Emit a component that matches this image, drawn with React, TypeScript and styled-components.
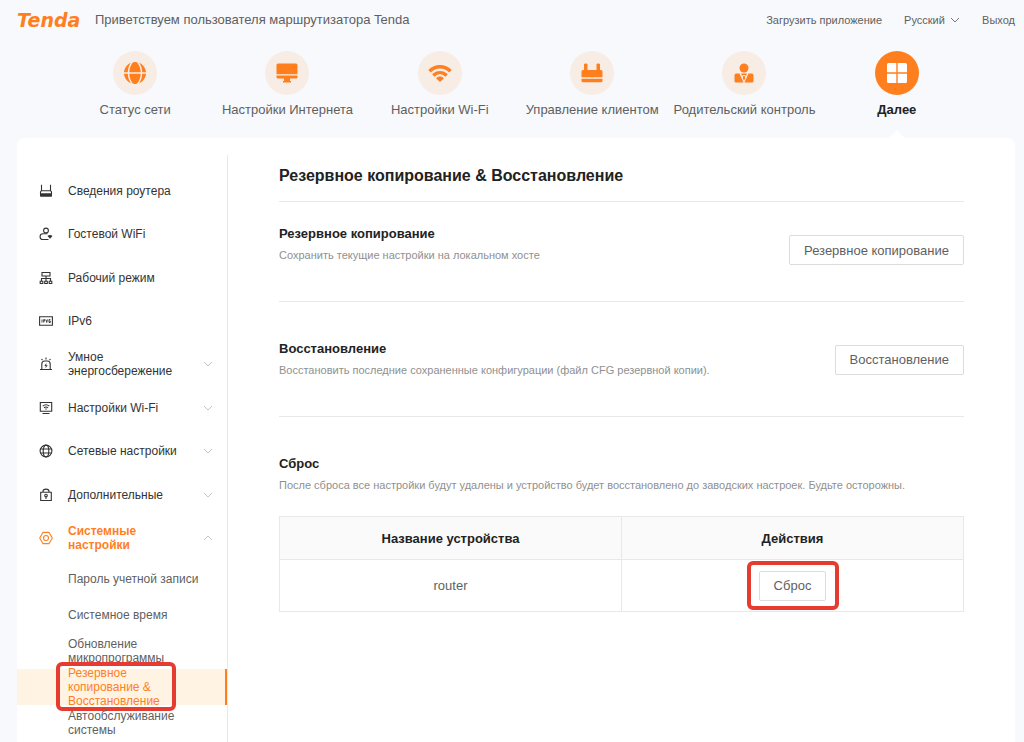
import React from "react";
import styled, { createGlobalStyle, css } from "styled-components";

const ORANGE = "#ff7f1f";
const LINE = "#e8e8e8";

const GlobalStyle = createGlobalStyle`
  *, *::before, *::after { box-sizing: border-box; }
  body {
    margin: 0;
    background: #f7f9fc;
    color: #5f5f5f;
    font-family: "Liberation Sans", Arial, sans-serif;
    font-size: 13px;
  }
  h1, h2, p, ul { margin: 0; padding: 0; }
  ul { list-style: none; }
  a { color: inherit; text-decoration: none; }
`;

const Page = styled.div`
  display: flex;
  flex-direction: column;
  min-height: 100vh;
  padding: 0 9px 0 17px;
`;

const Header = styled.header`
  display: flex;
  align-items: center;
  height: 40px;
`;

const Logo = styled.a`
  width: 78px;
  color: ${ORANGE};
  font: italic bold 19px/24px "DejaVu Sans", sans-serif;
`;

const Welcome = styled.p`
  flex: 1;
  line-height: 20px;
`;

const TopLinks = styled.div`
  display: flex;
  align-items: center;
  gap: 22px;
  font-size: 11px;
`;

const Language = styled.label`
  display: flex;
  align-items: center;
  gap: 5px;
`;

const LanguageSelect = styled.select`
  appearance: none;
  padding: 0;
  border: 0;
  background: none;
  color: inherit;
  font: inherit;
`;

const Nav = styled.nav`
  display: grid;
  grid-template-columns: repeat(6, 1fr);
  height: 98px;
  padding: 11px 42px 0;
`;

const NavItem = styled.a<{ $active?: boolean }>`
  position: relative;
  display: flex;
  flex-direction: column;
  align-items: center;
  gap: 5px;
  line-height: 20px;
  white-space: nowrap;
  ${(p) =>
    p.$active &&
    css`
      color: #222;
      font-weight: bold;
      &::after {
        content: "";
        position: absolute;
        bottom: 0;
        border: 8px solid transparent;
        border-top-width: 0;
        border-bottom-color: #fff;
      }
    `}
`;

const NavBadge = styled.span<{ $active?: boolean }>`
  display: grid;
  place-items: center;
  width: 44px;
  height: 44px;
  border-radius: 50%;
  background: ${(p) => (p.$active ? ORANGE : "#f8ede5")};
  color: ${(p) => (p.$active ? "#fff" : ORANGE)};
`;

const Panel = styled.div`
  display: flex;
  flex: 1;
  padding-top: 17px;
  border-radius: 8px 8px 0 0;
  background: #fff;
`;

const Sidebar = styled.aside`
  flex: 0 0 211px;
  padding-top: 14px;
  border-right: 1px solid ${LINE};
`;

const Menu = styled.ul`
  display: grid;
  grid-auto-rows: 1fr;
  height: 391px;
  margin-bottom: 1px;
`;

const MenuLink = styled.a<{ $active?: boolean }>`
  display: grid;
  grid-template-columns: 14px 120px 10px;
  column-gap: 15px;
  align-items: center;
  justify-content: start;
  height: 100%;
  padding-left: 22px;
  color: ${(p) => (p.$active ? ORANGE : "#333")};
  font-size: 12px;
  font-weight: ${(p) => (p.$active ? "bold" : "normal")};
  line-height: 14px;
`;

const MenuText = styled.span`
  max-width: 112px;
`;

const SubLink = styled.a<{ $active?: boolean }>`
  position: relative;
  display: flex;
  align-items: center;
  height: 36px;
  padding: 0 20px 0 51px;
  font-size: 12px;
  line-height: 14px;
  ${(p) =>
    p.$active &&
    css`
      border-right: 2px solid ${ORANGE};
      background: #fff3e3;
      color: ${ORANGE};
    `}
`;

const SubText = styled.span`
  max-width: 132px;
`;

const Ring = styled.span<{ $inset: string }>`
  position: absolute;
  inset: ${(p) => p.$inset};
  border: 4px solid #e53b31;
  border-radius: 6px;
  pointer-events: none;
`;

const Content = styled.main`
  flex: 1;
  min-width: 0;
  padding: 0 51px 40px 51px;
`;

const Title = styled.h1`
  height: 47px;
  padding-top: 9px;
  border-bottom: 1px solid ${LINE};
  color: #222;
  font-size: 16px;
  line-height: 24px;
`;

const Section = styled.section<{ $first?: boolean }>`
  display: flex;
  align-items: ${(p) => (p.$first ? "flex-end" : "center")};
  justify-content: space-between;
  padding: ${(p) => (p.$first ? "22px 0 36px" : "37px 0 36px")};
  border-bottom: 1px solid ${LINE};
`;

const ResetIntro = styled.div`
  padding: 37px 0 21px;
`;

const SectionTitle = styled.h2`
  color: #222;
  font-size: 13px;
  line-height: 20px;
`;

const Hint = styled.p`
  padding: 2px 0 1px;
  color: #909090;
  font-size: 11px;
  line-height: 18px;
`;

const Button = styled.button`
  height: 30px;
  padding: 0 14px;
  border: 1px solid #dcdcdc;
  border-radius: 2px;
  background: #fff;
  color: #5f5f5f;
  font: inherit;
`;

const Devices = styled.table`
  width: 100%;
  border-collapse: collapse;
  table-layout: fixed;
  text-align: center;

  th, td { padding: 0; border: 1px solid ${LINE}; }
  th { height: 43px; background: #fafafa; color: #222; }
  td { height: 52px; }
`;

const Marked = styled.span`
  position: relative;
  display: inline-block;
`;

const Chevron = ({ up, color = "#c4c4c4" }: { up?: boolean; color?: string }) => (
  <svg width="10" height="10" viewBox="0 0 10 10" fill="none" stroke={color} strokeWidth="1">
    <path d={up ? "M1 7l4-4 4 4" : "M1 3l4 4 4-4"} />
  </svg>
);

const navItems = [
  {
    label: "Статус сети",
    icon: (
      <svg width="24" height="24" viewBox="0 0 24 24">
        <circle cx="12" cy="12" r="11" fill="currentColor" />
        <g fill="none" stroke="#f8ede5" strokeWidth="1.500">
          <path d="M0 12h24" />
          <path d="M10 0C4 7 4 17 10 24M14 0c6 7 6 17 0 24" />
        </g>
      </svg>
    ),
  },
  {
    label: "Настройки Интернета",
    icon: (
      <svg width="22" height="20" viewBox="0 0 22 20" fill="currentColor">
        <path d="M2 0.500h18a1.500 1.500 0 0 1 1.500 1.500v9.300H.5V2A1.500 1.500 0 0 1 2 .5zM.5 12.500h21V14a1.500 1.500 0 0 1-1.500 1.500h-6v2.500h1v1.500H7V18h1v-2.500H2A1.500 1.500 0 0 1 .5 14z" />
      </svg>
    ),
  },
  {
    label: "Настройки Wi-Fi",
    icon: (
      <svg width="24" height="18" viewBox="0 0 24 18">
        <g fill="none" stroke="currentColor" strokeWidth="3.400">
          <path d="M1.500 7.300C7.500 1.300 16.500 1.300 22.500 7.300" />
          <path d="M5.300 11.500c4-3.900 9.400-3.900 13.400 0" />
        </g>
        <path d="M8 14.200c2.400-2.200 5.600-2.200 8 0L12 18z" fill="currentColor" />
      </svg>
    ),
  },
  {
    label: "Управление клиентом",
    icon: (
      <svg width="22" height="20" viewBox="0 0 22 20" fill="currentColor">
        <path d="M3 1.500C3 .2 6.500.2 6.500 1.500V7h9V1.500c0-1.300 3.500-1.300 3.500 0V7h1a1.500 1.500 0 0 1 1.500 1.500v5.800H.5V8.500A1.500 1.500 0 0 1 2 7h1zM.5 15.700h21v2.100a1.500 1.500 0 0 1-1.500 1.500H2A1.500 1.500 0 0 1 .5 17.800z" />
      </svg>
    ),
  },
  {
    label: "Родительский контроль",
    icon: (
      <svg width="20" height="20" viewBox="0 0 20 20" fill="currentColor">
        <circle cx="10" cy="5" r="4.500" />
        <path d="M2 10.500h3.500l4 9H2A1.500 1.500 0 0 1 .5 18v-6A1.500 1.500 0 0 1 2 10.500zM18 10.500h-3.500l-4 9H18a1.500 1.500 0 0 0 1.500-1.500v-6a1.500 1.500 0 0 0-1.500-1.500zM7 10.500h6L11.800 13 10.700 12h-1.400L8.200 13zM9.300 13h1.400l.6 2-1.300 3-1.300-3z" />
      </svg>
    ),
  },
  {
    label: "Далее",
    active: true,
    icon: (
      <svg width="20" height="20" viewBox="0 0 20 20" fill="currentColor">
        <path d="M1.500 0h7.800v9.300H0V1.500A1.500 1.500 0 0 1 1.500 0zM10.700 0h7.800A1.500 1.500 0 0 1 20 1.500v7.800h-9.300zM0 10.700h9.300V20H1.500A1.500 1.500 0 0 1 0 18.500zM10.700 10.700H20v7.800a1.500 1.500 0 0 1-1.500 1.500h-7.800z" />
      </svg>
    ),
  },
];

const SmallIcon = ({ children }: { children: React.ReactNode }) => (
  <svg width="14" height="14" viewBox="0 0 14 14" fill="none" stroke="currentColor" strokeWidth="1.100">
    {children}
  </svg>
);

const menuItems = [
  {
    label: "Сведения роутера",
    icon: (
      <SmallIcon>
        <path d="M2.500 .8v6M11.500 .8v6M1.500 10V8l.8-1.200h9.400l.8 1.200V10" />
        <path d="M1 9.300h12V12a.8.8 0 0 1-.8.8H1.800A.8.8 0 0 1 1 12z" fill="currentColor" stroke="none" />
      </SmallIcon>
    ),
  },
  {
    label: "Гостевой WiFi",
    icon: (
      <SmallIcon>
        <circle cx="7" cy="3.500" r="2.400" />
        <path d="M8.500 6.800H3.900a2.800 2.800 0 0 0 0 5.700H9.500" />
        <path d="M8.500 9c1.500-1.200 3.500-1.200 5 0L11 11.700z" fill="currentColor" stroke="none" />
      </SmallIcon>
    ),
  },
  {
    label: "Рабочий режим",
    icon: (
      <SmallIcon>
        <path d="M3 1.500h8v3.500H3zM7 5v5M2.500 10V7.500h9V10" />
        <path d="M1.200 10.200h2.600v2.300H1.200zM5.700 10.200h2.600v2.300H5.700zM10.200 10.200h2.600v2.300h-2.600z" />
      </SmallIcon>
    ),
  },
  {
    label: "IPv6",
    icon: (
      <SmallIcon>
        <path d="M.6 2.800h12.800v8.400H.6z" />
        <path d="M3 5.500v3M4.700 8.500v-3h1v1.500h-1M7 5.500l.7 3 .8-3M11.300 5.500h-1.300v3h1.300V7h-1.300" strokeWidth=".9" />
      </SmallIcon>
    ),
  },
  {
    label: "Умное энергосбережение",
    expandable: true,
    icon: (
      <SmallIcon>
        <path d="M1 12.500h12M2.800 12.500V7A3 3 0 0 1 5.800 4h2.400a3 3 0 0 1 3 3v5.500M7 .5v2M2.500 2l1 1.200M11.500 2l-1 1.200" />
        <path d="M7.500 6L5.300 9h1.500l-.4 2.200L8.700 8.300H7.200z" fill="currentColor" stroke="none" />
      </SmallIcon>
    ),
  },
  {
    label: "Настройки Wi-Fi",
    expandable: true,
    icon: (
      <SmallIcon>
        <path d="M1.300 1.500h11.400v8.700H1.300zM3.500 12.500h7" />
        <path d="M3.700 5.200c2-1.700 4.600-1.700 6.600 0M5 6.800c1.200-1 2.800-1 4 0" />
        <circle cx="7" cy="8" r=".7" fill="currentColor" stroke="none" />
      </SmallIcon>
    ),
  },
  {
    label: "Сетевые настройки",
    expandable: true,
    icon: (
      <SmallIcon>
        <circle cx="7" cy="7" r="5.900" />
        <ellipse cx="7" cy="7" rx="2.800" ry="5.900" />
        <path d="M1.500 5h11M1.500 9h11" />
      </SmallIcon>
    ),
  },
  {
    label: "Дополнительные",
    expandable: true,
    icon: (
      <SmallIcon>
        <path d="M1.700 4.300h10.600v8.200H1.700zM4 4V3.300C4 .4 10 .4 10 3.300V4M7 8.500v2.500" />
        <circle cx="7" cy="7.500" r="1.300" />
      </SmallIcon>
    ),
  },
  {
    label: "Системные настройки",
    expandable: true,
    active: true,
    icon: (
      <SmallIcon>
        <path d="M3.900 1.400h6.200L13.300 7l-3.200 5.600H3.900L.7 7z" strokeLinejoin="round" />
        <circle cx="7" cy="7" r="2.500" />
      </SmallIcon>
    ),
  },
];

const subItems = [
  { label: "Пароль учетной записи" },
  { label: "Системное время" },
  { label: "Обновление микропрограммы" },
  { label: "Резервное копирование & Восстановление", active: true },
  { label: "Автообслуживание системы" },
];

export default function App() {
  return (
    <>
      <GlobalStyle />
      <Page>
        <Header>
          <Logo href="#">Tenda</Logo>
          <Welcome>Приветствуем пользователя маршрутизатора Tenda</Welcome>
          <TopLinks>
            <a href="#app">Загрузить приложение</a>
            <Language>
              <LanguageSelect aria-label="Русский">
                <option>Русский</option>
              </LanguageSelect>
              <Chevron color="#777" />
            </Language>
            <a href="#logout">Выход</a>
          </TopLinks>
        </Header>

        <Nav>
          {navItems.map((item) => (
            <NavItem key={item.label} href="#" $active={item.active}>
              <NavBadge $active={item.active}>{item.icon}</NavBadge>
              {item.label}
            </NavItem>
          ))}
        </Nav>

        <Panel>
          <Sidebar>
            <Menu>
              {menuItems.map((item) => (
                <li key={item.label}>
                  <MenuLink href="#" $active={item.active}>
                    {item.icon}
                    <MenuText>{item.label}</MenuText>
                    {item.expandable && <Chevron up={item.active} />}
                  </MenuLink>
                </li>
              ))}
            </Menu>
            <ul>
              {subItems.map((item) => (
                <li key={item.label}>
                  <SubLink href="#" $active={item.active}>
                    <SubText>{item.label}</SubText>
                    {item.active && <Ring $inset="-7px 49px -6px 39px" />}
                  </SubLink>
                </li>
              ))}
            </ul>
          </Sidebar>

          <Content>
            <Title>Резервное копирование &amp; Восстановление</Title>
            <Section $first>
              <div>
                <SectionTitle>Резервное копирование</SectionTitle>
                <Hint>Сохранить текущие настройки на локальном хосте</Hint>
              </div>
              <Button type="button">Резервное копирование</Button>
            </Section>
            <Section>
              <div>
                <SectionTitle>Восстановление</SectionTitle>
                <Hint>Восстановить последние сохраненные конфигурации (файл CFG резервной копии).</Hint>
              </div>
              <Button type="button">Восстановление</Button>
            </Section>
            <ResetIntro>
              <SectionTitle>Сброс</SectionTitle>
              <Hint>
                После сброса все настройки будут удалены и устройство будет восстановлено до заводских настроек.
                Будьте осторожны.
              </Hint>
            </ResetIntro>
            <Devices>
              <thead>
                <tr>
                  <th scope="col">Название устройства</th>
                  <th scope="col">Действия</th>
                </tr>
              </thead>
              <tbody>
                <tr>
                  <td>router</td>
                  <td>
                    <Marked>
                      <Button type="button">Сброс</Button>
                      <Ring $inset="-10px -13px -9px -12px" />
                    </Marked>
                  </td>
                </tr>
              </tbody>
            </Devices>
          </Content>
        </Panel>
      </Page>
    </>
  );
}
